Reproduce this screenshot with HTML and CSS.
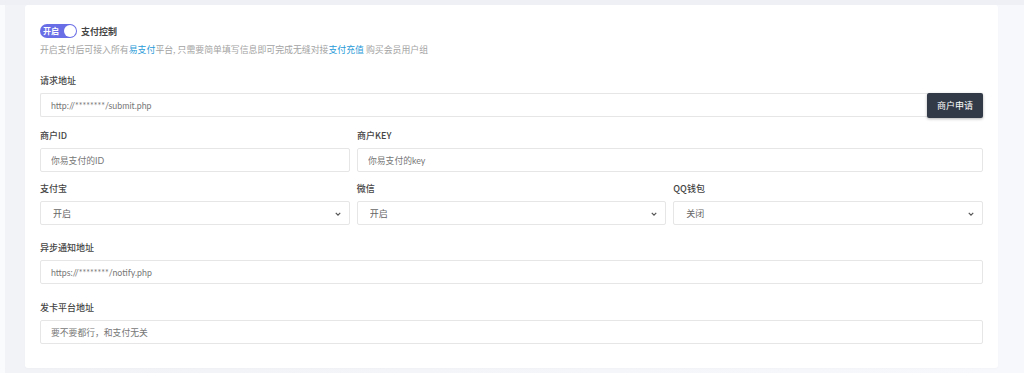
FILE: index.html
```html
<!DOCTYPE html>
<html lang="zh-CN">
<head>
<meta charset="utf-8">
<title>支付控制</title>
<link rel="stylesheet" href="styles.css">
</head>
<body>
<div class="page">
  <div class="card">
    <div class="switch-row">
      <span class="switch"><span class="switch-text">开启</span><span class="knob"></span></span>
      <span class="switch-label">支付控制</span>
    </div>
    <p class="desc">开启支付后可接入所有<a class="link">易支付</a>平台, 只需要简单填写信息即可完成无缝对接<a class="link">支付充值</a> 购买会员用户组</p>

    <div class="group g1">
      <div class="label">请求地址</div>
      <div class="input-group">
        <input class="input grow" type="text" value="http://********/submit.php">
        <button class="btn">商户申请</button>
      </div>
    </div>

    <div class="row two g2">
      <div class="group">
        <div class="label">商户ID</div>
        <input class="input" type="text" value="你易支付的ID">
      </div>
      <div class="group">
        <div class="label">商户KEY</div>
        <input class="input" type="text" value="你易支付的key">
      </div>
    </div>

    <div class="row three g3">
      <div class="group">
        <div class="label">支付宝</div>
        <div class="select-wrap">
          <select class="select"><option>开启</option><option>关闭</option></select>
          <svg class="chev" viewBox="0 0 8 5" width="6" height="4"><path d="M1 1 L4 4 L7 1" fill="none" stroke="#555" stroke-width="1.6"/></svg>
        </div>
      </div>
      <div class="group">
        <div class="label">微信</div>
        <div class="select-wrap">
          <select class="select"><option>开启</option><option>关闭</option></select>
          <svg class="chev" viewBox="0 0 8 5" width="6" height="4"><path d="M1 1 L4 4 L7 1" fill="none" stroke="#555" stroke-width="1.6"/></svg>
        </div>
      </div>
      <div class="group">
        <div class="label">QQ钱包</div>
        <div class="select-wrap">
          <select class="select"><option>关闭</option><option>开启</option></select>
          <svg class="chev" viewBox="0 0 8 5" width="6" height="4"><path d="M1 1 L4 4 L7 1" fill="none" stroke="#555" stroke-width="1.6"/></svg>
        </div>
      </div>
    </div>

    <div class="group g4">
      <div class="label">异步通知地址</div>
      <input class="input" type="text" value="https://********/notify.php">
    </div>

    <div class="group g5">
      <div class="label">发卡平台地址</div>
      <input class="input" type="text" value="要不要都行，和支付无关">
    </div>
  </div>
</div>
</body>
</html>
```

FILE: styles.css
```css
* { box-sizing: border-box; }
html, body { margin: 0; padding: 0; }
body {
  background: #f5f6fa;
  font-family: Lato, "Noto Sans CJK SC", sans-serif;
  color: #333;
}
.page {
  width: 1024px;
  height: 373px;
  padding: 5px 26px 0 25px;
  background: linear-gradient(to bottom, #eef0f5 0, #eef0f5 5px, transparent 5px),
              linear-gradient(to right, #fafbfd 0, #fafbfd 5px, #f2f3f7 5px, #f2f3f7 25px, #f7f8fc 998px);
}
.card {
  background: #fff;
  border-radius: 3px;
  padding: 19px 15px 25px 15px;
  height: 363px;
  box-shadow: 0 1px 2px rgba(0,0,0,0.02);
}
.switch-row {
  display: flex;
  align-items: center;
  height: 14px;
  gap: 4px;
}
.switch {
  display: flex;
  align-items: center;
  justify-content: space-between;
  width: 37px;
  height: 14px;
  border-radius: 7px;
  background: #6a6ee6;
  padding: 0 1px 0 3px;
}
.switch-text {
  color: #fff;
  font-size: 8px;
  font-weight: 700;
  line-height: 14px;
  font-family: "Noto Sans CJK SC", sans-serif;
}
.knob {
  width: 12px;
  height: 12px;
  border-radius: 50%;
  background: #fff;
}
.switch-label {
  font-size: 9px;
  font-weight: 700;
  color: #444;
  line-height: 14px;
  position: relative;
  top: 1px;
  font-family: "Noto Sans CJK SC", sans-serif;
}
.desc {
  margin: 6px 0 0 0;
  font-size: 8.9px;
  line-height: 12px;
  color: #a3a3a3;
  font-family: "Noto Sans CJK SC", sans-serif;
}
.link { color: #2a9bd8; text-decoration: none; }
.label {
  font-size: 9px;
  line-height: 12px;
  font-weight: 500;
  color: #444;
  margin-bottom: 6px;
  font-family: "Noto Sans CJK SC", sans-serif;
}
.group { min-width: 0; }
.g1 { margin-top: 19px; }
.g2 { margin-top: 12px; }
.g3 { margin-top: 11px; }
.g4 { margin-top: 17px; }
.g5 { margin-top: 18px; }
.row { display: grid; gap: 7px; }
.row.two { grid-template-columns: 310px 1fr; }
.row.three { grid-template-columns: 1fr 1fr 1fr; }
.input-group { display: flex; align-items: flex-start; }
.input {
  display: block;
  width: 100%;
  height: 24px;
  border: 1px solid #e6e6e6;
  border-radius: 2px;
  padding: 0 10px;
  font-size: 8.8px;
  color: #777;
  font-family: Lato, "Noto Sans CJK SC", sans-serif;
  background: #fff;
  outline: none;
}
.input.grow { flex: 1; border-right: none; border-radius: 2px 0 0 2px; }
.btn {
  height: 25px;
  width: 56px;
  border: none;
  border-radius: 2px;
  background: #323a47;
  color: #fff;
  font-size: 9px;
  font-family: "Noto Sans CJK SC", sans-serif;
  box-shadow: 0 1px 3px rgba(0,0,0,0.3);
  padding: 0;
}
.select-wrap { position: relative; }
.select {
  display: block;
  width: 100%;
  height: 24px;
  appearance: none;
  -webkit-appearance: none;
  border: 1px solid #e6e6e6;
  border-radius: 2px;
  padding: 0 12px;
  font-size: 9px;
  color: #666;
  background: #fff;
  font-family: "Noto Sans CJK SC", sans-serif;
  outline: none;
}
.chev {
  position: absolute;
  right: 9px;
  top: 11px;
}
```
